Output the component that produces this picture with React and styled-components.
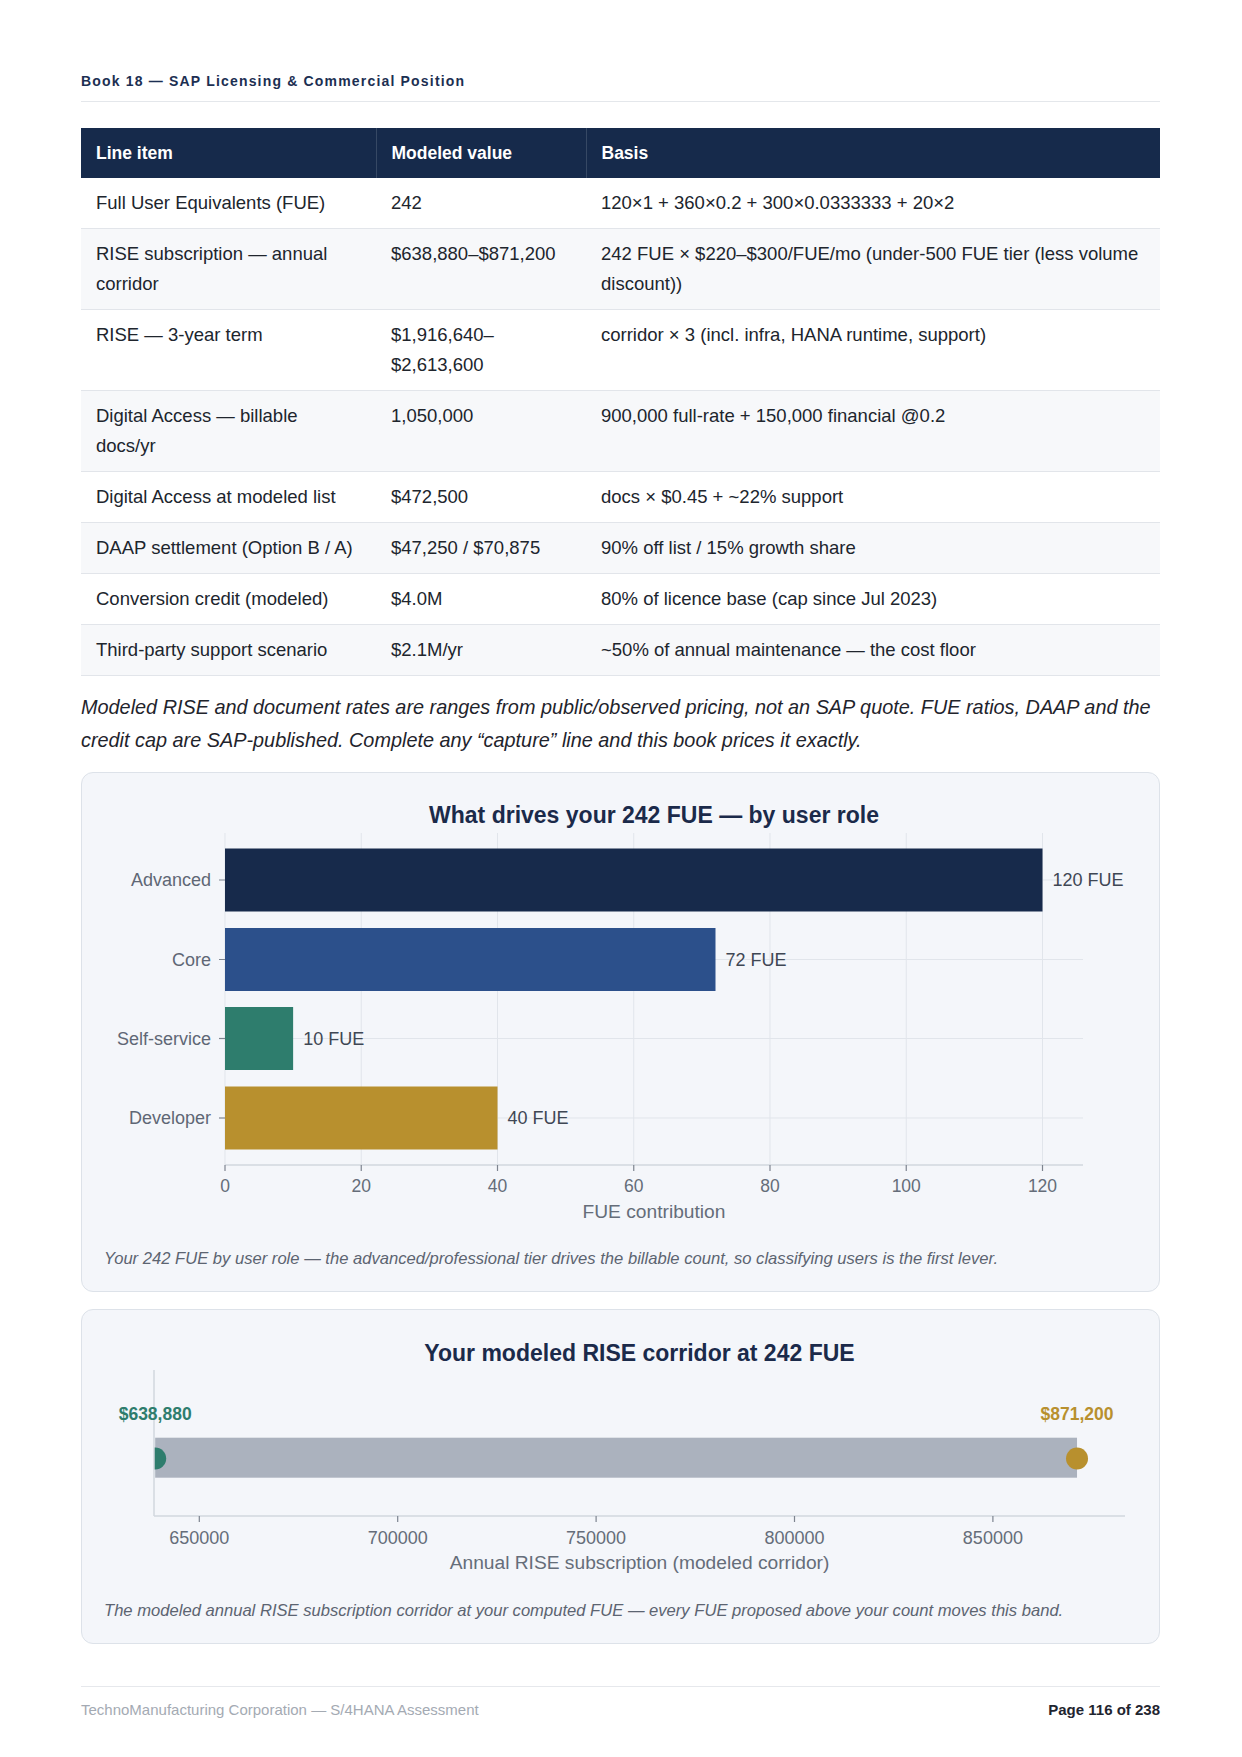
import React from "react";
import styled, { createGlobalStyle } from "styled-components";

const GlobalStyle = createGlobalStyle`
  html, body { margin: 0; padding: 0; background: #ffffff; }
  body { font-family: "Liberation Sans", Arial, Helvetica, sans-serif; color: #1f2530; }
  * { box-sizing: border-box; }
`;

const Page = styled.div`
  width: 1242px;
  padding: 71px 82px 40px 81px;
`;

const RunningHeader = styled.header`
  font-size: 14px;
  line-height: 20px;
  font-weight: 700;
  letter-spacing: 1.18px;
  color: #1c2f52;
  padding-bottom: 10px;
  border-bottom: 1px solid #e4e7eb;
`;

const Table = styled.table`
  width: 100%;
  margin-top: 26px;
  border-collapse: collapse;
  font-size: 18.5px;
  line-height: 30px;
  table-layout: fixed;
`;

const HeadCell = styled.th`
  background: #162a4b;
  color: #ffffff;
  font-size: 17.5px;
  font-weight: 700;
  text-align: left;
  padding: 10px 15px;
  width: ${(p) => p.$w || "auto"};
  border-left: ${(p) => (p.$first ? "none" : "1px solid rgba(255,255,255,0.14)")};
`;

const Row = styled.tr`
  background: ${(p) => (p.$alt ? "#f7f8fa" : "#ffffff")};
  border-bottom: 1px solid #e2e5ea;
`;

const Cell = styled.td`
  padding: 10px 15px;
  vertical-align: top;
  color: #20252d;
`;

const Note = styled.p`
  margin: 15px 0 0;
  font-size: 19.85px;
  line-height: 33px;
  font-style: italic;
  color: #1f242c;
`;

const ChartCard = styled.section`
  margin-top: ${(p) => p.$gap}px;
  background: #f4f6fa;
  border: 1px solid #dde2e9;
  border-radius: 12px;
  padding-bottom: 20px;
  overflow: hidden;
`;

const ChartSvg = styled.svg`
  display: block;
  width: 1077px;
`;

const Caption = styled.p`
  margin: 11px 0 0;
  padding: 0 22px;
  font-size: 16.6px;
  line-height: 24px;
  font-style: italic;
  color: #5c6471;
`;

const ChartTitle = styled.text`
  font-family: "Liberation Sans", Arial, sans-serif;
  font-size: 23px;
  font-weight: 700;
  fill: #1b2a4a;
`;

const TickText = styled.text`
  font-family: "Liberation Sans", Arial, sans-serif;
  font-size: ${(p) => p.$size || 18}px;
  fill: ${(p) => p.$color || "#656d79"};
  font-weight: ${(p) => (p.$bold ? 700 : 400)};
`;

const Footer = styled.footer`
  margin-top: 42px;
  border-top: 1px solid #e6e8ec;
  padding-top: 13px;
  display: flex;
  justify-content: space-between;
  align-items: center;
  font-size: 15px;
  line-height: 20px;
`;

const FooterLeft = styled.span`
  color: #a4aab3;
`;

const FooterRight = styled.span`
  color: #1f2530;
  font-weight: 700;
`;

const rows = [
  ["Full User Equivalents (FUE)", "242", "120×1 + 360×0.2 + 300×0.0333333 + 20×2"],
  ["RISE subscription — annual corridor", "$638,880–$871,200", "242 FUE × $220–$300/FUE/mo (under-500 FUE tier (less volume discount))"],
  ["RISE — 3-year term", "$1,916,640–$2,613,600", "corridor × 3 (incl. infra, HANA runtime, support)"],
  ["Digital Access — billable docs/yr", "1,050,000", "900,000 full-rate + 150,000 financial @0.2"],
  ["Digital Access at modeled list", "$472,500", "docs × $0.45 + ~22% support"],
  ["DAAP settlement (Option B / A)", "$47,250 / $70,875", "90% off list / 15% growth share"],
  ["Conversion credit (modeled)", "$4.0M", "80% of licence base (cap since Jul 2023)"],
  ["Third-party support scenario", "$2.1M/yr", "~50% of annual maintenance — the cost floor"],
];

const roles = [
  { label: "Advanced", value: 120, color: "#172a4b", cy: 880 },
  { label: "Core", value: 72, color: "#2c508b", cy: 959.5 },
  { label: "Self-service", value: 10, color: "#2e7d6d", cy: 1038.5 },
  { label: "Developer", value: 40, color: "#b8902e", cy: 1118 },
];

function RoleChart() {
  const X0 = 225;
  const PX = 6.8125;
  const TOP = 833;
  const BOT = 1165;
  const RIGHT = 1083;
  const ticks = [0, 20, 40, 60, 80, 100, 120];
  return (
    <ChartSvg viewBox="82 773 1077 463" height="463">
      <ChartTitle x="654" y="823" textAnchor="middle">
        What drives your 242 FUE — by user role
      </ChartTitle>
      {ticks.map((t) => (
        <line key={"g" + t} x1={X0 + t * PX} x2={X0 + t * PX} y1={TOP} y2={BOT} stroke="#e1e5eb" strokeWidth="1" />
      ))}
      {roles.map((r) => (
        <line key={"h" + r.label} x1={X0} x2={RIGHT} y1={r.cy} y2={r.cy} stroke="#e1e5eb" strokeWidth="1" />
      ))}
      {roles.map((r) => (
        <rect key={"b" + r.label} x={X0} y={r.cy - 31.5} width={r.value * PX} height="63" fill={r.color} />
      ))}
      {roles.map((r) => (
        <g key={"l" + r.label}>
          <line x1="219" x2={X0} y1={r.cy} y2={r.cy} stroke="#7d848f" strokeWidth="1.2" />
          <TickText x="211" y={r.cy + 6.4} textAnchor="end" $color="#5f6775">
            {r.label}
          </TickText>
          <TickText x={X0 + r.value * PX + 10} y={r.cy + 6.4} $color="#3f4754">
            {r.value} FUE
          </TickText>
        </g>
      ))}
      <line x1={X0} x2={RIGHT} y1={BOT} y2={BOT} stroke="#d2d7de" strokeWidth="1.5" />
      {ticks.map((t) => (
        <g key={"t" + t}>
          <line x1={X0 + t * PX} x2={X0 + t * PX} y1={BOT} y2={BOT + 6} stroke="#7d848f" strokeWidth="1.2" />
          <TickText x={X0 + t * PX} y="1192.3" textAnchor="middle" $size={17.5}>
            {t}
          </TickText>
        </g>
      ))}
      <TickText x="654" y="1217.8" textAnchor="middle" $size={19.2}>
        FUE contribution
      </TickText>
    </ChartSvg>
  );
}

function CorridorChart() {
  const map = (v) => 199.3 + (v - 650000) * 0.003968;
  const LEFT = 154;
  const RIGHT = 1125;
  const TOP = 1370;
  const BOT = 1516;
  const ticks = [650000, 700000, 750000, 800000, 850000];
  const lo = map(638880);
  const hi = map(871200);
  return (
    <ChartSvg viewBox="82 1310 1077 278" height="278">
      <defs>
        <clipPath id="plotClip">
          <rect x={LEFT} y={TOP} width={RIGHT - LEFT} height={BOT - TOP} />
        </clipPath>
      </defs>
      <ChartTitle x="639.5" y="1361.2" textAnchor="middle">
        Your modeled RISE corridor at 242 FUE
      </ChartTitle>
      <g clipPath="url(#plotClip)">
        <rect x={lo} y="1437.7" width={hi - lo} height="40" fill="#abb2be" />
        <circle cx={lo} cy="1458.5" r="11" fill="#2e7d6d" />
        <circle cx={hi} cy="1458.5" r="11" fill="#b8902e" />
      </g>
      <line x1={LEFT} x2={LEFT} y1={TOP} y2={BOT} stroke="#d2d7de" strokeWidth="1.5" />
      <line x1={LEFT} x2={RIGHT} y1={BOT} y2={BOT} stroke="#d2d7de" strokeWidth="1.5" />
      <TickText x={lo} y="1419.9" textAnchor="middle" $size={17.5} $bold $color="#2e7d6d">
        $638,880
      </TickText>
      <TickText x={hi} y="1419.9" textAnchor="middle" $size={17.5} $bold $color="#b8902e">
        $871,200
      </TickText>
      {ticks.map((t) => (
        <g key={t}>
          <line x1={map(t)} x2={map(t)} y1={BOT} y2={BOT + 6} stroke="#7d848f" strokeWidth="1.2" />
          <TickText x={map(t)} y="1544" textAnchor="middle">
            {t}
          </TickText>
        </g>
      ))}
      <TickText x="639.5" y="1568.8" textAnchor="middle" $size={19.2}>
        Annual RISE subscription (modeled corridor)
      </TickText>
    </ChartSvg>
  );
}

export default function App() {
  return (
    <>
      <GlobalStyle />
      <Page>
        <RunningHeader>Book 18 — SAP Licensing &amp; Commercial Position</RunningHeader>
        <Table>
          <thead>
            <tr>
              <HeadCell $first $w="295px">Line item</HeadCell>
              <HeadCell $w="210px">Modeled value</HeadCell>
              <HeadCell>Basis</HeadCell>
            </tr>
          </thead>
          <tbody>
            {rows.map((r, i) => (
              <Row key={i} $alt={i % 2 === 1}>
                <Cell>{r[0]}</Cell>
                <Cell>{r[1]}</Cell>
                <Cell>{r[2]}</Cell>
              </Row>
            ))}
          </tbody>
        </Table>
        <Note>
          Modeled RISE and document rates are ranges from public/observed pricing, not an SAP quote. FUE ratios, DAAP and the
          credit cap are SAP-published. Complete any “capture” line and this book prices it exactly.
        </Note>
        <ChartCard $gap={15}>
          <RoleChart />
          <Caption>
            Your 242 FUE by user role — the advanced/professional tier drives the billable count, so classifying users is the first lever.
          </Caption>
        </ChartCard>
        <ChartCard $gap={17}>
          <CorridorChart />
          <Caption>
            The modeled annual RISE subscription corridor at your computed FUE — every FUE proposed above your count moves this band.
          </Caption>
        </ChartCard>
        <Footer>
          <FooterLeft>TechnoManufacturing Corporation — S/4HANA Assessment</FooterLeft>
          <FooterRight>Page 116 of 238</FooterRight>
        </Footer>
      </Page>
    </>
  );
}
